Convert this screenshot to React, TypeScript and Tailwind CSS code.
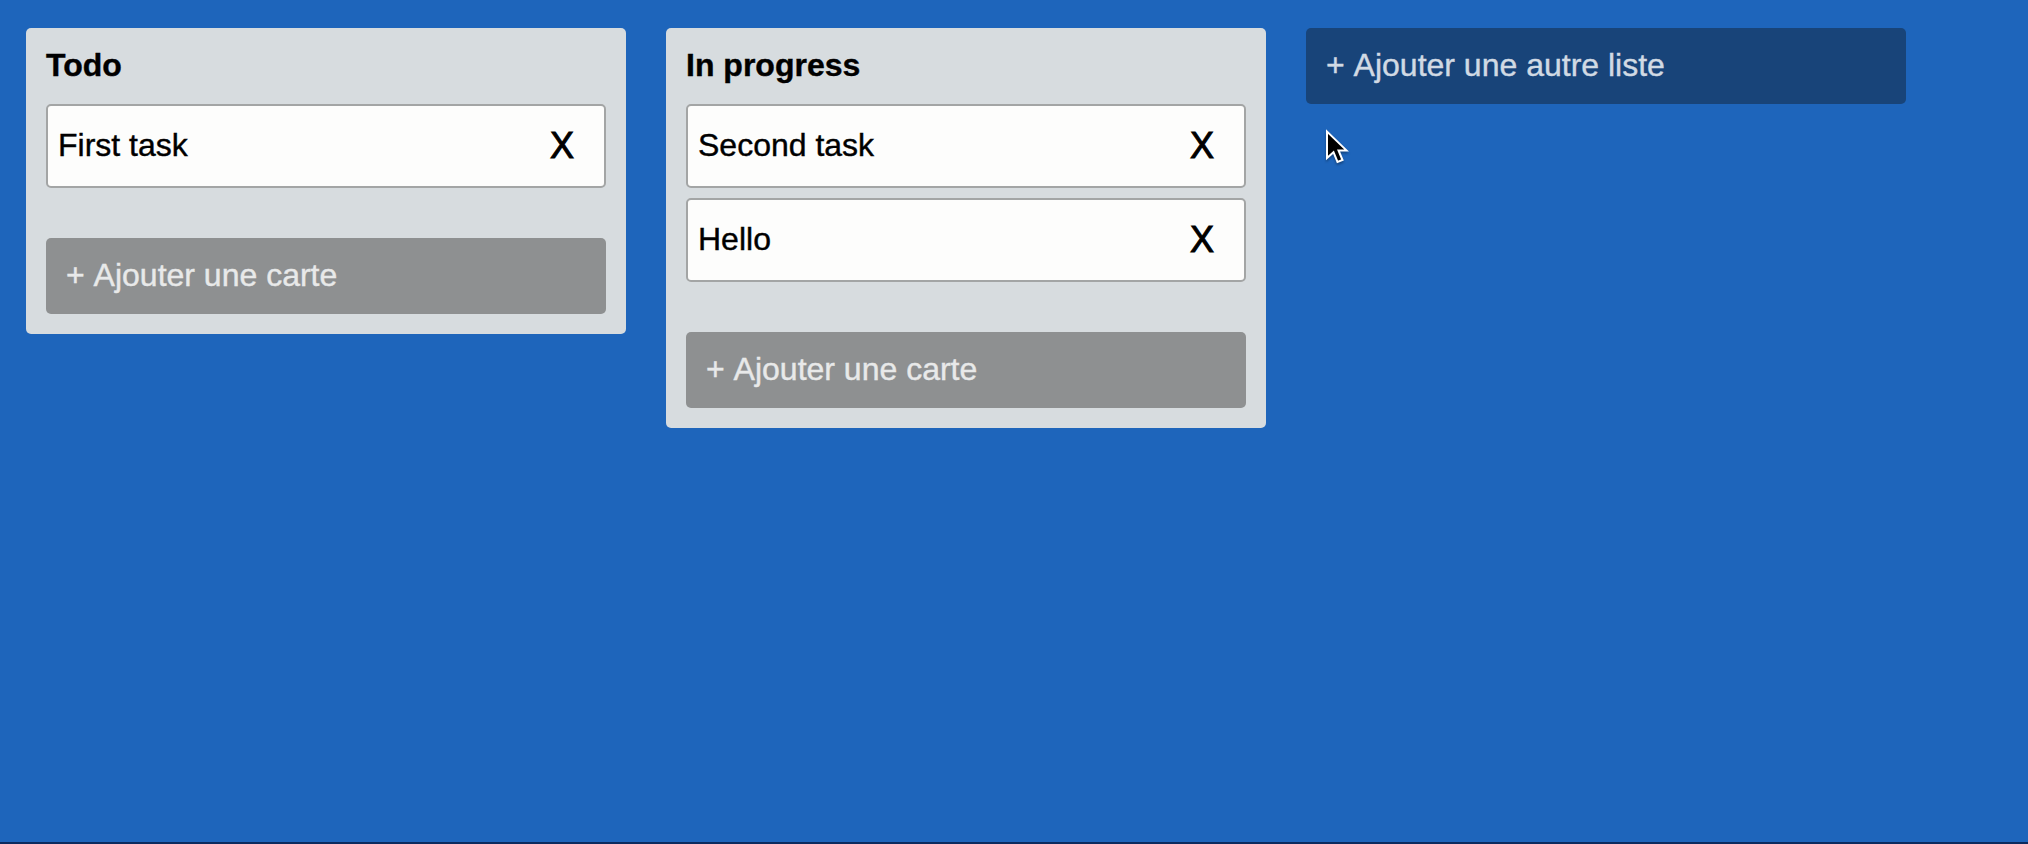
const LISTS = [
  { title: "Todo", cards: ["First task"] },
  { title: "In progress", cards: ["Second task", "Hello"] },
];

function Card({ label }: { label: string }) {
  return (
    <li className="flex h-[84px] items-center justify-between rounded-[5px] border-2 border-[#a3a5a5] bg-[#fdfdfc] pr-[30px] pl-[10px]">
      <span className="pb-0.5">{label}</span>
      <button className="text-[36px] leading-none [-webkit-text-stroke:1px]">X</button>
    </li>
  );
}

function List({ title, cards }: { title: string; cards: string[] }) {
  return (
    <section className="w-[600px] rounded-[5px] bg-[#d7dcdf] px-5 pt-[19px] pb-5">
      <h2 className="mb-[21px] h-9 leading-9 font-bold">{title}</h2>
      <ul className="flex flex-col gap-[10px]">
        {cards.map((card) => (
          <Card key={card} label={card} />
        ))}
      </ul>
      <button className="mt-[50px] block h-[76px] w-full rounded-[5px] bg-[#8e9091] px-5 pb-[3px] text-left text-[#e8e9e9] [font-kerning:none]">
        + Ajouter une carte
      </button>
    </section>
  );
}

export default function App() {
  return (
    <main className="flex h-[844px] w-full items-start gap-10 overflow-hidden border-b-2 border-[#0b2a5e] bg-[#1e65bb] pt-7 pl-[26px] font-['Liberation_Sans',Arial,sans-serif] text-[32px] leading-9 text-black [-webkit-text-stroke:0.4px]">
      {LISTS.map((list) => (
        <List key={list.title} title={list.title} cards={list.cards} />
      ))}
      <div className="relative w-[600px]">
        <button className="block h-[76px] w-full rounded-[5px] bg-[#184479] px-5 pb-[3px] text-left text-[#d1dae4] [font-kerning:none]">
          + Ajouter une autre liste
        </button>
        <svg
          className="absolute top-[100px] left-[19px] drop-shadow-[0_2px_1px_rgba(0,0,0,0.3)]"
          width="26"
          height="38"
          viewBox="0 0 26 38"
        >
          <path
            d="M2 3.5V30L8.5 24.2L12.5 34L17.5 32L13.5 22.4H21.5Z"
            fill="#000"
            stroke="#fff"
            strokeWidth="2"
          />
        </svg>
      </div>
    </main>
  );
}
